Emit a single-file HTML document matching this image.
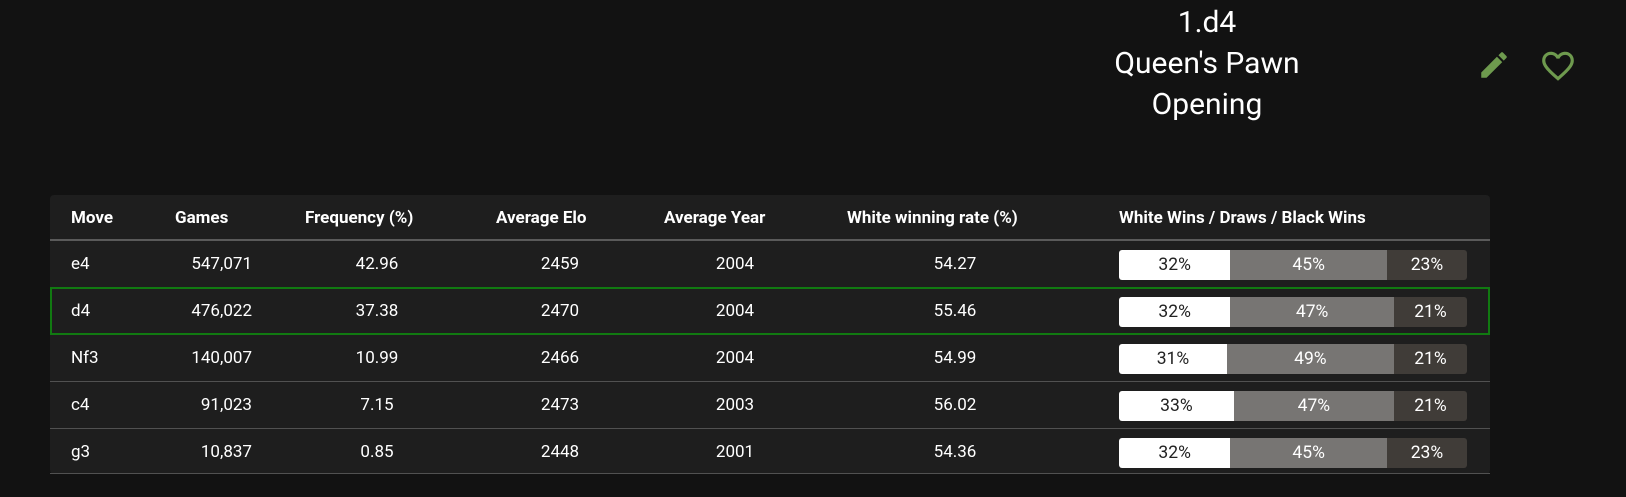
<!DOCTYPE html>
<html><head><meta charset="utf-8"><style>
body{margin:0;width:1626px;height:497px;background:#121212;font-family:Roboto,"Liberation Sans",sans-serif;color:#fff;position:relative;overflow:hidden}
.t{position:absolute;left:1007px;width:400px;text-align:center;font-size:30px;line-height:41px;top:2px}
.tbl{position:absolute;left:50px;top:195px;width:1440px;height:279px;background:#1e1e1e;border-radius:4px}
.row{position:absolute;left:0;width:1440px;height:47px;border-bottom:1px solid #515151;box-sizing:border-box}
.c{position:absolute;top:0;line-height:46px;font-size:17px;white-space:nowrap}
.m{transform:translateX(-50%)}
.h .c{font-weight:bold;font-size:17px}
.bar{position:absolute;left:1069px;top:9px;width:348px;height:30px;display:flex;border-radius:3px;overflow:hidden;font-size:17.5px;line-height:30px;text-align:center}
.bar .w{background:#fff;color:#222}.bar .d{background:#777573}.bar .b{background:#403c38}
</style></head><body>
<div class="t">1.d4<br>Queen's Pawn<br>Opening</div>
<svg style="position:absolute;left:1477px;top:48px" width="34" height="34" viewBox="0 0 24 24"><path fill="#6e9a4e" d="M3 17.25V21h3.75L17.810 9.94l-3.75-3.75L3 17.25zM20.71 7.04a1 1 0 0 0 0-1.41l-2.34-2.34a1 1 0 0 0-1.410 0l-1.83 1.83 3.75 3.75 1.83-1.83z"/></svg>
<svg style="position:absolute;left:1539px;top:47px" width="38" height="38" viewBox="0 0 24 24"><path fill="#6e9a4e" d="M16.5 3c-1.74 0-3.41.81-4.5 2.09C10.91 3.81 9.24 3 7.5 3 4.42 3 2 5.42 2 8.5c0 3.78 3.4 6.86 8.55 11.54L12 21.35l1.45-1.32C18.6 15.36 22 12.28 22 8.5 22 5.42 19.58 3 16.5 3zm-4.4 15.55l-.1.1-.1-.1C7.14 14.24 4 11.39 4 8.5 4 6.5 5.5 5 7.5 5c1.54 0 3.04.99 3.57 2.36h1.87C13.46 5.99 14.96 5 16.5 5c2 0 3.5 1.5 3.5 3.5 0 2.89-3.14 5.740-7.9 10.05z"/></svg>
<div class="tbl">
<div class="row h" style="top:0;height:46px;border-bottom:2px solid #5a5a5a">
<span class="c" style="left:21px">Move</span><span class="c" style="left:125px">Games</span><span class="c" style="left:255px">Frequency (%)</span><span class="c" style="left:446px">Average Elo</span><span class="c" style="left:614px">Average Year</span><span class="c" style="left:797px">White winning rate (%)</span><span class="c" style="left:1069px">White Wins / Draws / Black Wins</span>
</div>
<div class="row" style="top:46px"><span class="c" style="left:21px">e4</span><span class="c" style="right:1238px">547,071</span><span class="c m" style="left:327px">42.96</span><span class="c m" style="left:510px">2459</span><span class="c m" style="left:685px">2004</span><span class="c m" style="left:905px">54.27</span><div class="bar"><div class="w" style="width:32%">32%</div><div class="d" style="width:45%">45%</div><div class="b" style="width:23%">23%</div></div></div>
<div class="row" style="border:2px solid #117a11;height:48px;top:92px"><span class="c" style="left:19px;top:-1px">d4</span><span class="c" style="right:1236px;top:-1px">476,022</span><span class="c m" style="left:325px;top:-1px">37.38</span><span class="c m" style="left:508px;top:-1px">2470</span><span class="c m" style="left:683px;top:-1px">2004</span><span class="c m" style="left:903px;top:-1px">55.46</span><div class="bar" style="left:1067px;top:8px"><div class="w" style="width:32%">32%</div><div class="d" style="width:47%">47%</div><div class="b" style="width:21%">21%</div></div></div>
<div class="row" style="top:140px"><span class="c" style="left:21px">Nf3</span><span class="c" style="right:1238px">140,007</span><span class="c m" style="left:327px">10.99</span><span class="c m" style="left:510px">2466</span><span class="c m" style="left:685px">2004</span><span class="c m" style="left:905px">54.99</span><div class="bar"><div class="w" style="width:31%">31%</div><div class="d" style="width:48%">49%</div><div class="b" style="width:21%">21%</div></div></div>
<div class="row" style="top:187px"><span class="c" style="left:21px">c4</span><span class="c" style="right:1238px">91,023</span><span class="c m" style="left:327px">7.15</span><span class="c m" style="left:510px">2473</span><span class="c m" style="left:685px">2003</span><span class="c m" style="left:905px">56.02</span><div class="bar"><div class="w" style="width:33%">33%</div><div class="d" style="width:46%">47%</div><div class="b" style="width:21%">21%</div></div></div>
<div class="row" style="top:234px;height:45px"><span class="c" style="left:21px">g3</span><span class="c" style="right:1238px">10,837</span><span class="c m" style="left:327px">0.85</span><span class="c m" style="left:510px">2448</span><span class="c m" style="left:685px">2001</span><span class="c m" style="left:905px">54.36</span><div class="bar"><div class="w" style="width:32%">32%</div><div class="d" style="width:45%">45%</div><div class="b" style="width:23%">23%</div></div></div>
</div>
</body></html>
